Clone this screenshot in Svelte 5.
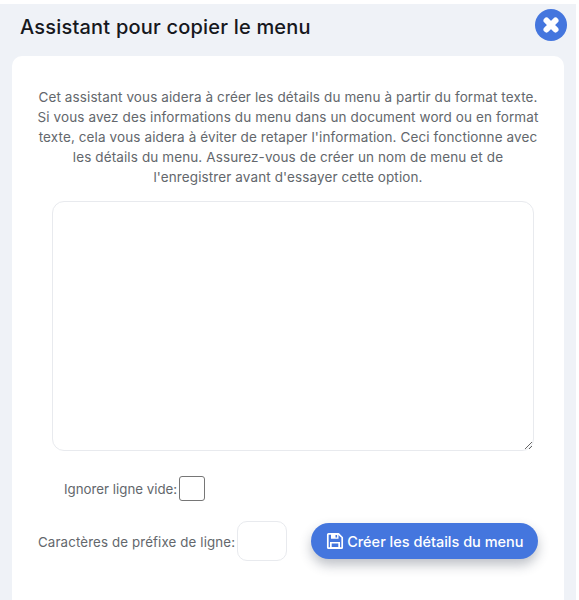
<script>
  let text = $state('');
  let skipEmpty = $state(false);
  let prefix = $state('');
</script>

<div class="page">
  <header class="head">
    <h1>Assistant pour copier le menu</h1>
    <button class="close" aria-label="Fermer">
      <svg viewBox="0 0 32 32" width="32" height="32">
        <circle cx="16" cy="16" r="16" fill="#4476de" />
        <path d="M11.500 11.500 L20.500 20.500 M20.500 11.500 L11.500 20.500" stroke="#fff" stroke-width="6" stroke-linecap="round" />
      </svg>
    </button>
  </header>

  <section class="card">
    <p class="intro">
      Cet assistant vous aidera à créer les détails du menu à partir du format texte.
      Si vous avez des informations du menu dans un document word ou en format
      texte, cela vous aidera à éviter de retaper l'information. Ceci fonctionne avec
      les détails du menu. Assurez-vous de créer un nom de menu et de
      l'enregistrer avant d'essayer cette option.
    </p>

    <textarea bind:value={text}></textarea>

    <div class="row check-row">
      <label for="skip">Ignorer ligne vide:</label>
      <input id="skip" class="check" type="checkbox" bind:checked={skipEmpty} />
    </div>

    <div class="row prefix-row">
      <label for="prefix">Caractères de préfixe de ligne:</label>
      <input id="prefix" class="prefix" type="text" bind:value={prefix} />
      <button class="create">
        <svg viewBox="0 0 18 18" width="18" height="18">
          <path fill="none" stroke="#fff" stroke-width="1.7" stroke-linejoin="round" d="M2.500 1.800h10l3.700 3.700v10a.7.7 0 0 1-.7.7h-13a.7.700 0 0 1-.7-.7v-13a.7.700 0 0 1 .7-.7z" />
          <path fill="#fff" d="M5 1.800h7.500v5H5zM4 10h10v6.500H4z" />
          <path fill="#4476de" d="M9.500 3h1.600v2.600H9.500zM5.700 11.600h6.600v3.400H5.700z" />
        </svg>
        Créer les détails du menu
      </button>
    </div>
  </section>
</div>

<style>
  :global(body) {
    margin: 0;
    background: #fff;
    font-family: "Inter", "Noto Sans", sans-serif;
  }

  .page {
    box-sizing: border-box;
    width: 576px;
    height: 596px;
    margin-top: 4px;
    padding: 0 12px;
    background: #eff2f7;
    overflow: hidden;
  }

  .head {
    display: flex;
    align-items: center;
    justify-content: space-between;
    height: 52px;
    margin-right: -3px;
  }

  h1 {
    margin: 0 0 6px 8px;
    font-size: 20px;
    font-weight: 500;
    color: #16181d;
    letter-spacing: 0.2px;
  }

  .close {
    padding: 0;
    border: none;
    background: none;
    line-height: 0;
    margin-bottom: 11px;
  }

  .card {
    box-sizing: border-box;
    height: 560px;
    padding: 31px 30px 0 40px;
    background: #fff;
    border-radius: 10px;
  }

  .intro {
    width: 506px;
    margin: 0 0 14px -17px;
    text-align: center;
    font-size: 13.5px;
    letter-spacing: 0.11px;
    line-height: 20px;
    color: #63676c;
  }

  textarea {
    display: block;
    box-sizing: border-box;
    width: 482px;
    height: 250px;
    border: 1px solid #e8eaee;
    border-radius: 12px;
    outline: none;
  }

  .row {
    display: flex;
    align-items: center;
    font-size: 13.3px;
    color: #63676c;
  }

  label {
    white-space: nowrap;
  }

  .check-row {
    margin: 25px 0 0 12px;
    gap: 2px;
  }

  .check {
    appearance: none;
    box-sizing: border-box;
    width: 26px;
    height: 25px;
    margin: 0;
    background: #fff;
    border: 1px solid #767676;
    border-radius: 3px;
  }

  .prefix-row {
    margin: 20px 0 0 -14px;
    gap: 2px;
    letter-spacing: 0.13px;
  }

  .prefix-row label {
    padding-top: 2px;
  }

  .prefix {
    box-sizing: border-box;
    flex-shrink: 0;
    width: 50px;
    height: 40px;
    border: 1px solid #e8eaee;
    border-radius: 10px;
    outline: none;
  }

  .create {
    display: flex;
    flex-shrink: 0;
    align-items: center;
    gap: 3px;
    height: 36px;
    width: 227px;
    margin-left: 22px;
    padding: 0 0 0 15px;
    border: none;
    border-radius: 18px;
    background: #4476de;
    color: #fff;
    font-family: inherit;
    font-size: 14.5px;
    font-weight: 500;
    white-space: nowrap;
    box-shadow: 0 6px 12px rgba(40, 50, 70, 0.3);
  }
</style>
